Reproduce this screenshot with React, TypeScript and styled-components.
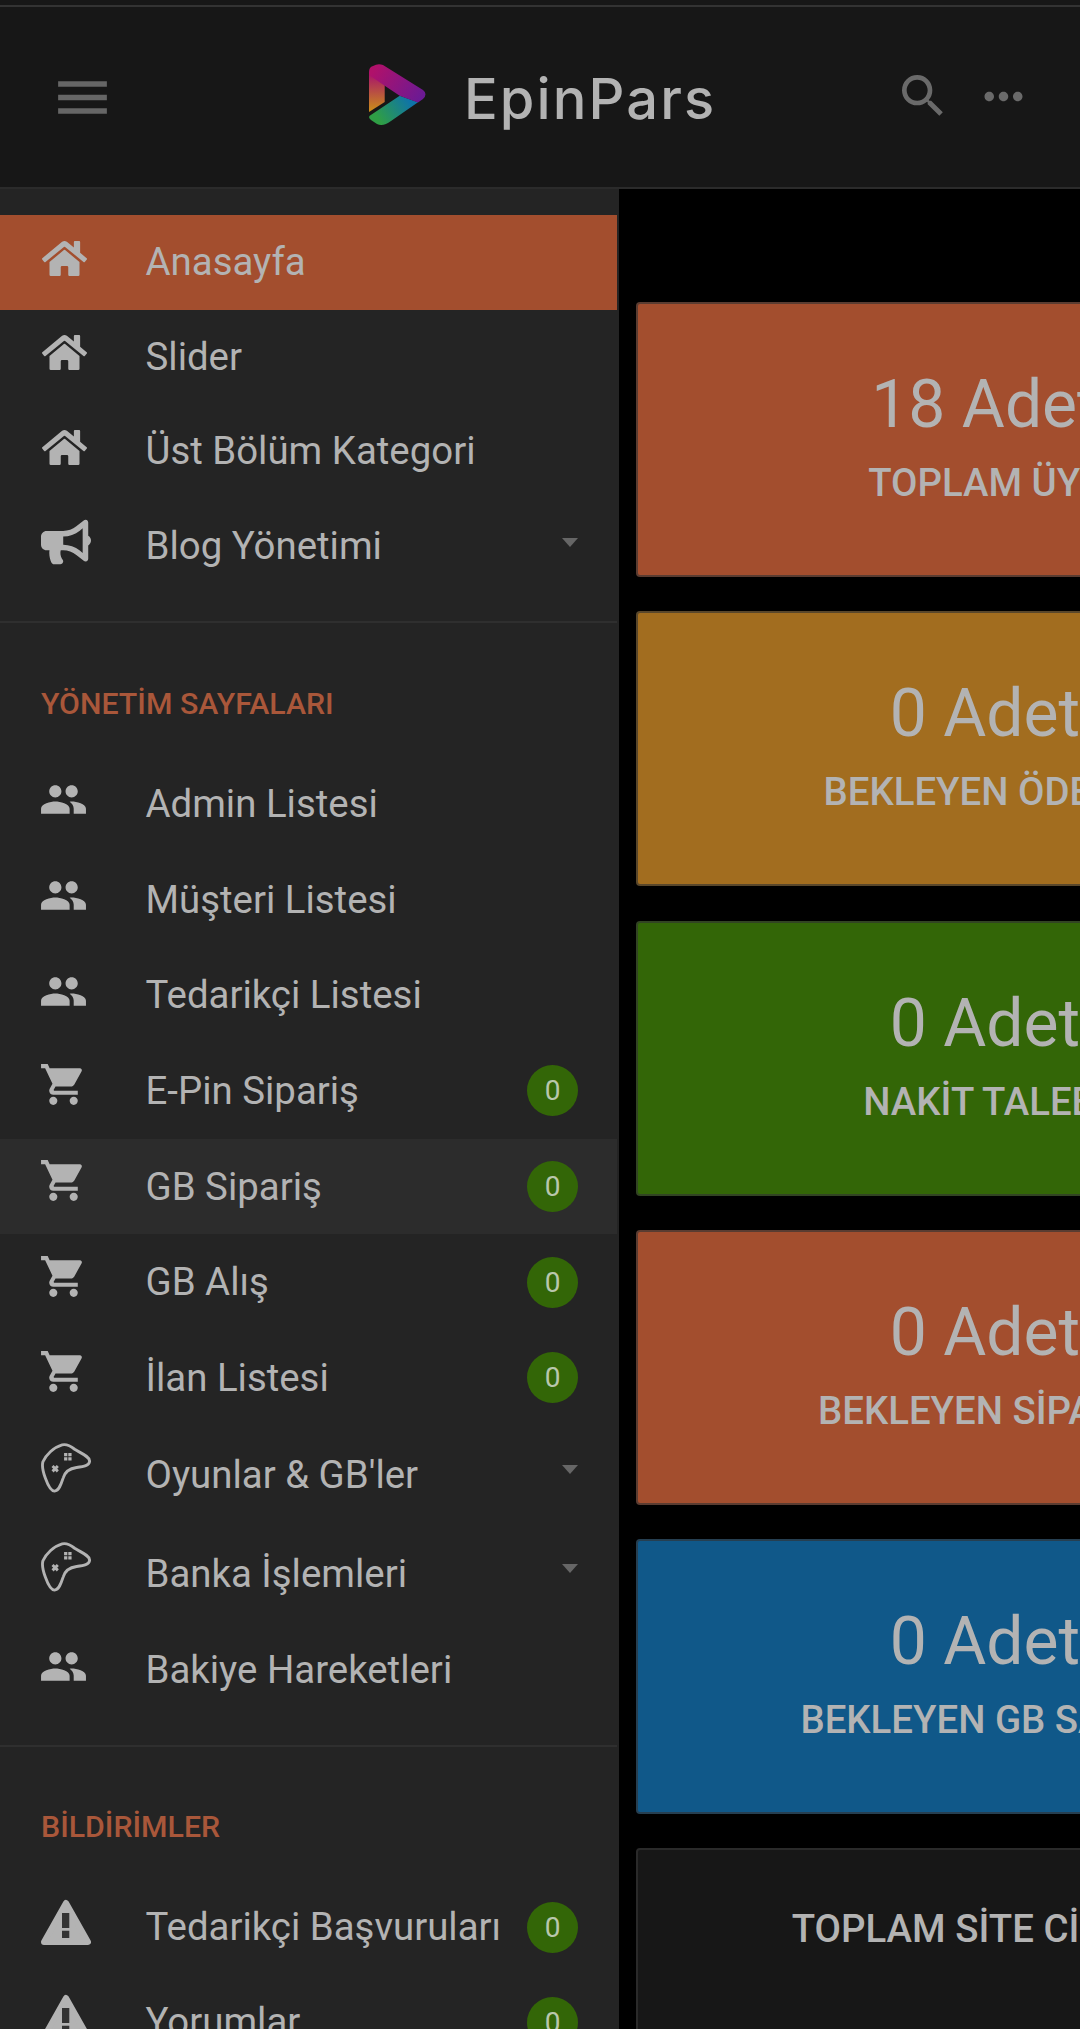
import React from "react";
import styled, { createGlobalStyle } from "styled-components";
import { FaHome, FaBullhorn } from "react-icons/fa";
import { MdMenu, MdSearch, MdMoreHoriz, MdPeople, MdShoppingCart } from "react-icons/md";

function GamepadIcon() {
  return <svg width="50" height="50" viewBox="11 7 52 51" fill="none">
    <path
      d="M13 26C16 19 24 11 33 8.5C37 7.5 41 9 46 13C52 17 61 20 61.5 25C62 30 55 31 48 32C41 33 36 36 34 43C32 49 30 56 25 56.5C21 56.5 18 50 15.5 43C13 36 11.5 31 13 26Z"
      stroke="#b3b3b3" strokeWidth="3" />
    <path d="M35 17h3.4v3.4h-3.4zM39.4 17h3.4v3.4h-3.4zM35 21.4h3.4v3.4h-3.4zM39.4 21.4h3.4v3.4h-3.4z" fill="#b3b3b3" />
    <path d="M23 30.5l5.5 5.5M28.5 30.5L23 36" stroke="#b3b3b3" strokeWidth="3" />
  </svg>
}

function WarningIcon() {
  return <svg width="50" height="47" viewBox="0 0 50 47">
    <path d="M25 4L47 43H3Z" fill="#b3b3b3" stroke="#b3b3b3" strokeWidth="6" strokeLinejoin="round" />
    <path d="M21 14h7.3v15H21zM21 31.7h7.3V39H21z" fill="#333" />
  </svg>
}

function Logo() {
  return <svg width="58" height="62" viewBox="0 0 58 62">
    <defs>
      <linearGradient id="logoTop" x1="6" y1="4" x2="52" y2="34" gradientUnits="userSpaceOnUse">
        <stop offset="0" stopColor="#b0116a" />
        <stop offset="1" stopColor="#6b1a94" />
      </linearGradient>
      <linearGradient id="logoLeft" x1="7" y1="10" x2="7" y2="46" gradientUnits="userSpaceOnUse">
        <stop offset="0" stopColor="#a8146a" />
        <stop offset="1" stopColor="#c98a1c" />
      </linearGradient>
      <linearGradient id="logoBottom" x1="10" y1="56" x2="40" y2="36" gradientUnits="userSpaceOnUse">
        <stop offset="0" stopColor="#2f9e45" />
        <stop offset="1" stopColor="#0f74a8" />
      </linearGradient>
    </defs>
    <path d="M0 8H15.7V38L0 48Z" fill="url(#logoLeft)" />
    <path d="M0.7 51.7L30.7 31.7L49 38.3L22 57Q14 63 8 60L2 56Q-1 54 0.7 51.7Z" fill="url(#logoBottom)" />
    <path d="M0 8Q0 3 4 2Q9 -1 14 1L54 26Q59 30 54 35L49 38.5L30.7 31.7L15.7 21.7L0 11Z" fill="url(#logoTop)" />
  </svg>
}

type IconName = "home" | "horn" | "people" | "cart" | "gamepad" | "warning";

type Item = {
  label: string;
  icon: IconName;
  height?: number;
  badge?: boolean;
  caret?: boolean;
  active?: boolean;
  hover?: boolean;
};

const mainItems: Item[] = [
  { label: "Anasayfa", icon: "home", active: true },
  { label: "Slider", icon: "home" },
  { label: "Üst Bölüm Kategori", icon: "home" },
  { label: "Blog Yönetimi", icon: "horn", caret: true },
];

const adminItems: Item[] = [
  { label: "Admin Listesi", icon: "people", height: 95.7 },
  { label: "Müşteri Listesi", icon: "people", height: 95.7 },
  { label: "Tedarikçi Listesi", icon: "people", height: 95.7 },
  { label: "E-Pin Sipariş", icon: "cart", height: 95.7, badge: true },
  { label: "GB Sipariş", icon: "cart", height: 95.7, badge: true, hover: true },
  { label: "GB Alış", icon: "cart", height: 95.7, badge: true },
  { label: "İlan Listesi", icon: "cart", height: 95.7, badge: true },
  { label: "Oyunlar & GB'ler", icon: "gamepad", height: 99, caret: true },
  { label: "Banka İşlemleri", icon: "gamepad", height: 99, caret: true },
  { label: "Bakiye Hareketleri", icon: "people", height: 93 },
];

const noticeItems: Item[] = [
  { label: "Tedarikçi Başvuruları", icon: "warning", height: 95, badge: true },
  { label: "Yorumlar", icon: "warning", height: 95, badge: true },
];

const cards = [
  { value: "18 Adet", label: "TOPLAM ÜYE", color: "#a34e2e" },
  { value: "0 Adet", label: "BEKLEYEN ÖDEME", color: "#a26d1f" },
  { value: "0 Adet", label: "NAKİT TALEBİ", color: "#336607" },
  { value: "0 Adet", label: "BEKLEYEN SİPARİŞ", color: "#a34e2e" },
  { value: "0 Adet", label: "BEKLEYEN GB SATIŞI", color: "#105889" },
];

// how far each icon sits above the middle of its row
const iconLift: Record<IconName, number> = {
  home: 8,
  horn: 8,
  people: 8,
  cart: 12,
  gamepad: 14,
  warning: 10,
};

function ItemIcon({ name }: { name: IconName }) {
  if (name === "home") return <HomeIcon><FaHome size={45} /></HomeIcon>;
  if (name === "horn") return <FaBullhorn size={50} />;
  if (name === "warning") return <WarningIcon />;
  if (name === "gamepad") return <GamepadIcon />;
  if (name === "people") return <MaterialIcon><MdPeople size={49} /></MaterialIcon>;
  return <MaterialIcon><MdShoppingCart size={49} /></MaterialIcon>;
}

function MenuRow({ item }: { item: Item }) {
  return <Row $height={item.height ?? 94.5} $active={item.active} $hover={item.hover}>
    <RowIcon $lift={iconLift[item.icon]}><ItemIcon name={item.icon} /></RowIcon>
    <RowLabel>{item.label}</RowLabel>
    {item.badge && <Badge>0</Badge>}
    {item.caret && <Caret $lift={item.icon === "gamepad" ? 11 : 7} />}
  </Row>
}

export default function App() {
  return <Page>
    <GlobalStyle />
    <TopStrip />
    <Header>
      <MenuButton><MdMenu size={65} /></MenuButton>
      <Brand>
        <Logo />
        <BrandName>EpinPars</BrandName>
      </Brand>
      <HeaderTools>
        <MdSearch size={56} />
        <MdMoreHoriz size={57} />
      </HeaderTools>
    </Header>
    <Body>
      <Sidebar>
        <Group>
          {mainItems.map((item) => <MenuRow key={item.label} item={item} />)}
        </Group>
        <Group>
          <SectionTitle>YÖNETİM SAYFALARI</SectionTitle>
          {adminItems.map((item) => <MenuRow key={item.label} item={item} />)}
        </Group>
        <Group>
          <SectionTitle>BİLDİRİMLER</SectionTitle>
          {noticeItems.map((item) => <MenuRow key={item.label} item={item} />)}
        </Group>
      </Sidebar>
      <Main>
        {cards.map((card) => <StatCard key={card.label} $color={card.color}>
          <StatValue>{card.value}</StatValue>
          <StatLabel>{card.label}</StatLabel>
        </StatCard>)}
        <TotalCard>
          <TotalTitle>TOPLAM SİTE CİROSU</TotalTitle>
        </TotalCard>
      </Main>
    </Body>
  </Page>
}

const GlobalStyle = createGlobalStyle`
  html, body {
    margin: 0;
    background: #000;
    overflow: hidden;
  }

  * {
    box-sizing: border-box;
  }
`

const Page = styled.div`
  width: 1080px;
  height: 2029px;
  overflow: hidden;
  font-family: Roboto, "Liberation Sans", sans-serif;
  color: #b3b3b3;
`

const TopStrip = styled.div`
  height: 7px;
  background: #171717;
  border-bottom: 2px solid #333;
`

const Header = styled.header`
  display: flex;
  align-items: center;
  height: 182px;
  padding-left: 50px;
  background: #171717;
  border-bottom: 2px solid #2b2b2b;
`

const MenuButton = styled.div`
  display: flex;
  width: 65px;
  color: #666;
`

const Brand = styled.div`
  display: flex;
  align-items: center;
  gap: 37px;
  width: 526px;
  margin-left: 254px;
  margin-bottom: 4px;
`

const BrandName = styled.span`
  margin-top: 8px;
  font-family: Inter, sans-serif;
  font-size: 56px;
  font-weight: 500;
  letter-spacing: 2.1px;
  color: #b3b3b3;
`

const HeaderTools = styled.div`
  display: flex;
  align-items: center;
  gap: 24px;
  color: #6a6a6a;
  margin-bottom: 2px;
`

const Body = styled.div`
  display: flex;
`

const Sidebar = styled.aside`
  flex: 0 0 619px;
  height: 1840px;
  overflow: hidden;
  background: #242424;
  border-right: 2px solid #242424;
`

const Group = styled.div`
  padding-top: 26px;
  padding-bottom: 28px;
  border-bottom: 2px solid #2f2f2f;
`

const Row = styled.div<{ $height: number; $active?: boolean; $hover?: boolean }>`
  display: flex;
  align-items: center;
  height: ${(p) => p.$height}px;
  padding: 0 39px 0 41px;
  background: ${(p) => (p.$active ? "#a34e2e" : p.$hover ? "#2c2c2c" : "transparent")};
`

const RowIcon = styled.div<{ $lift: number }>`
  display: flex;
  flex: 0 0 104.5px;
  margin-bottom: ${(p) => p.$lift}px;
  color: #b3b3b3;
`

const HomeIcon = styled.span`
  display: flex;
  margin-left: 1px;
`

const MaterialIcon = styled.span`
  display: flex;
  margin-left: -2px;
`

const RowLabel = styled.span`
  flex: 1;
  font-size: 38.4px;
  line-height: 46px;
  white-space: nowrap;
`

const Badge = styled.span`
  display: flex;
  align-items: center;
  justify-content: center;
  width: 51px;
  height: 51px;
  border-radius: 50%;
  background: #336607;
  color: #b9c7ac;
  font-size: 28px;
`

const Caret = styled.span<{ $lift: number }>`
  width: 0;
  height: 0;
  margin-bottom: ${(p) => p.$lift}px;
  border-left: 8.5px solid transparent;
  border-right: 8.5px solid transparent;
  border-top: 9px solid #666;
`

const SectionTitle = styled.div`
  padding: 36.5px 41px 35.5px;
  font-size: 30.3px;
  line-height: 35px;
  font-weight: 500;
  color: #a9573a;
`

const Main = styled.main`
  display: flex;
  flex: 1;
  flex-direction: column;
  gap: 34.3px;
  height: 1840px;
  padding: 113px 0 0 17px;
  overflow: hidden;
`

const StatCard = styled.section<{ $color: string }>`
  flex: 0 0 275px;
  width: 698px;
  padding-top: 61px;
  text-align: center;
  background: ${(p) => p.$color};
  border: 2px solid rgba(50, 50, 50, 0.65);
  border-radius: 4px;
`

const StatValue = styled.div`
  font-size: 66px;
  line-height: 79px;
`

const StatLabel = styled.div`
  margin-top: 16px;
  font-size: 38.4px;
  line-height: 46px;
  font-weight: 500;
`

const TotalCard = styled.section`
  flex: 0 0 400px;
  width: 698px;
  padding-top: 56px;
  text-align: center;
  background: #171717;
  border: 2px solid #2a2a2a;
  border-radius: 4px;
`

const TotalTitle = styled.div`
  font-size: 38.4px;
  line-height: 46px;
  font-weight: 500;
`
